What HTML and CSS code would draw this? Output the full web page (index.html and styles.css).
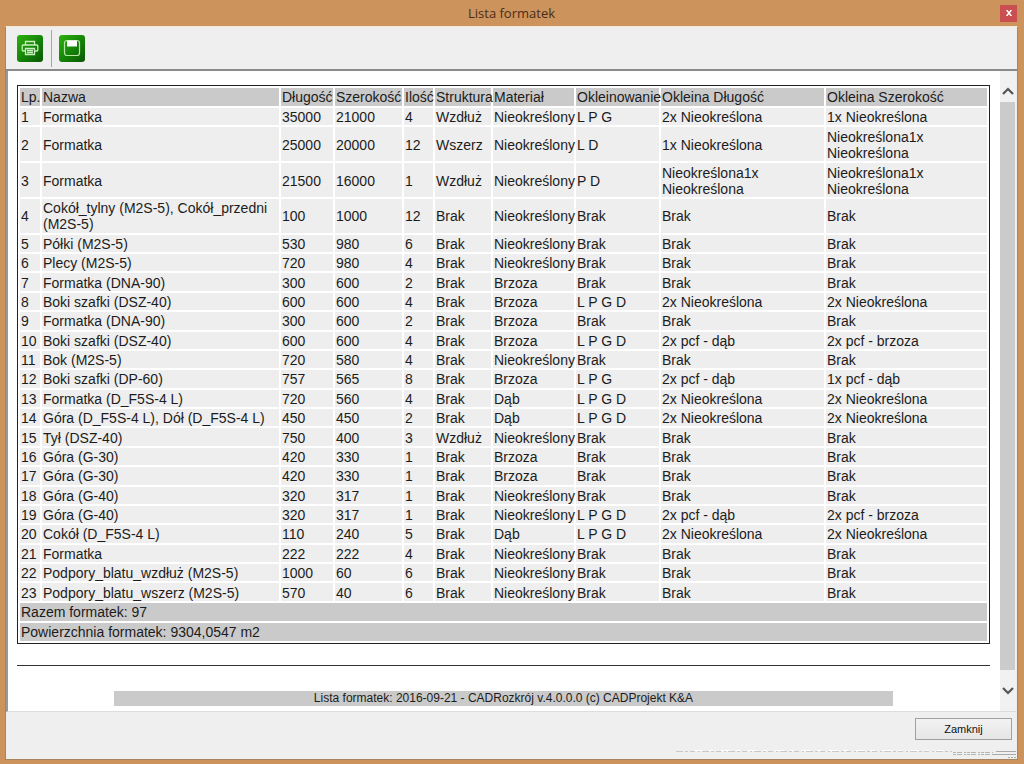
FILE: index.html
```html
<!DOCTYPE html>
<html lang="pl">
<head>
<meta charset="utf-8">
<title>Lista formatek</title>
<link rel="stylesheet" href="styles.css">
</head>
<body>
<div class="window">
  <header class="titlebar">
    <h1 class="title">Lista formatek</h1>
    <button class="close" type="button" aria-label="Zamknij okno"><svg width="6" height="6" viewBox="0 0 6 6"><path d="M1 .5 5 5.5M5 .5 1 5.5" stroke="#fff" stroke-width="1.4"/><path d="M0 .5h2M4 .5h2M0 5.5h2M4 5.5h2" stroke="#fff" stroke-width=".7"/></svg></button>
  </header>
  <div class="client">
    <div class="toolbar">
      <button class="tool" type="button" aria-label="Drukuj"><svg width="18" height="18" viewBox="0 0 18 18" fill="none" stroke="#c9efbf" stroke-width="1.3"><path d="M4.5 6V2.5h9V6M4 12H2.2Q1.2 12 1.2 11V7Q1.2 6 2.2 6h13.6q1 0 1 1v4q0 1-1 1H14"/><path d="M4.5 9.5h9v6h-9zM6 11.5h6M6 13.5h6"/></svg></button>
      <span class="divider"></span>
      <button class="tool" type="button" aria-label="Zapisz"><svg width="18" height="18" viewBox="0 0 18 18"><rect x="1.5" y="1.5" width="15" height="15" rx="2.5" fill="none" stroke="#b5e6a6" stroke-width="1.2"/><path d="M4 1.5h10v6H4z" fill="#fff"/></svg></button>
    </div>
    <div class="view">
      <main class="report">
        <table class="parts">
          <colgroup><col class="c-lp"><col class="c-name"><col class="c-len"><col class="c-wid"><col class="c-qty"><col class="c-str"><col class="c-mat"><col class="c-edge"><col class="c-el"><col class="c-ew"></colgroup>
          <thead><tr><th>Lp.</th><th>Nazwa</th><th>Długość</th><th>Szerokość</th><th>Ilość</th><th>Struktura</th><th>Materiał</th><th>Okleinowanie</th><th>Okleina Długość</th><th>Okleina Szerokość</th></tr></thead>
          <tbody>
            <tr><td>1</td><td>Formatka</td><td>35000</td><td>21000</td><td>4</td><td>Wzdłuż</td><td>Nieokreślony</td><td>L P G</td><td>2x Nieokreślona</td><td>1x Nieokreślona</td></tr>
            <tr><td>2</td><td>Formatka</td><td>25000</td><td>20000</td><td>12</td><td>Wszerz</td><td>Nieokreślony</td><td>L D</td><td>1x Nieokreślona</td><td>Nieokreślona1x<br>Nieokreślona</td></tr>
            <tr><td>3</td><td>Formatka</td><td>21500</td><td>16000</td><td>1</td><td>Wzdłuż</td><td>Nieokreślony</td><td>P D</td><td>Nieokreślona1x<br>Nieokreślona</td><td>Nieokreślona1x<br>Nieokreślona</td></tr>
            <tr><td>4</td><td>Cokół_tylny (M2S-5), Cokół_przedni (M2S-5)</td><td>100</td><td>1000</td><td>12</td><td>Brak</td><td>Nieokreślony</td><td>Brak</td><td>Brak</td><td>Brak</td></tr>
            <tr><td>5</td><td>Półki (M2S-5)</td><td>530</td><td>980</td><td>6</td><td>Brak</td><td>Nieokreślony</td><td>Brak</td><td>Brak</td><td>Brak</td></tr>
            <tr><td>6</td><td>Plecy (M2S-5)</td><td>720</td><td>980</td><td>4</td><td>Brak</td><td>Nieokreślony</td><td>Brak</td><td>Brak</td><td>Brak</td></tr>
            <tr><td>7</td><td>Formatka (DNA-90)</td><td>300</td><td>600</td><td>2</td><td>Brak</td><td>Brzoza</td><td>Brak</td><td>Brak</td><td>Brak</td></tr>
            <tr><td>8</td><td>Boki szafki (DSZ-40)</td><td>600</td><td>600</td><td>4</td><td>Brak</td><td>Brzoza</td><td>L P G D</td><td>2x Nieokreślona</td><td>2x Nieokreślona</td></tr>
            <tr><td>9</td><td>Formatka (DNA-90)</td><td>300</td><td>600</td><td>2</td><td>Brak</td><td>Brzoza</td><td>Brak</td><td>Brak</td><td>Brak</td></tr>
            <tr><td>10</td><td>Boki szafki (DSZ-40)</td><td>600</td><td>600</td><td>4</td><td>Brak</td><td>Brzoza</td><td>L P G D</td><td>2x pcf - dąb</td><td>2x pcf - brzoza</td></tr>
            <tr><td>11</td><td>Bok (M2S-5)</td><td>720</td><td>580</td><td>4</td><td>Brak</td><td>Nieokreślony</td><td>Brak</td><td>Brak</td><td>Brak</td></tr>
            <tr><td>12</td><td>Boki szafki (DP-60)</td><td>757</td><td>565</td><td>8</td><td>Brak</td><td>Brzoza</td><td>L P G</td><td>2x pcf - dąb</td><td>1x pcf - dąb</td></tr>
            <tr><td>13</td><td>Formatka (D_F5S-4 L)</td><td>720</td><td>560</td><td>4</td><td>Brak</td><td>Dąb</td><td>L P G D</td><td>2x Nieokreślona</td><td>2x Nieokreślona</td></tr>
            <tr><td>14</td><td>Góra (D_F5S-4 L), Dół (D_F5S-4 L)</td><td>450</td><td>450</td><td>2</td><td>Brak</td><td>Dąb</td><td>L P G D</td><td>2x Nieokreślona</td><td>2x Nieokreślona</td></tr>
            <tr><td>15</td><td>Tył (DSZ-40)</td><td>750</td><td>400</td><td>3</td><td>Wzdłuż</td><td>Nieokreślony</td><td>Brak</td><td>Brak</td><td>Brak</td></tr>
            <tr><td>16</td><td>Góra (G-30)</td><td>420</td><td>330</td><td>1</td><td>Brak</td><td>Brzoza</td><td>Brak</td><td>Brak</td><td>Brak</td></tr>
            <tr><td>17</td><td>Góra (G-30)</td><td>420</td><td>330</td><td>1</td><td>Brak</td><td>Brzoza</td><td>Brak</td><td>Brak</td><td>Brak</td></tr>
            <tr><td>18</td><td>Góra (G-40)</td><td>320</td><td>317</td><td>1</td><td>Brak</td><td>Nieokreślony</td><td>Brak</td><td>Brak</td><td>Brak</td></tr>
            <tr><td>19</td><td>Góra (G-40)</td><td>320</td><td>317</td><td>1</td><td>Brak</td><td>Nieokreślony</td><td>L P G D</td><td>2x pcf - dąb</td><td>2x pcf - brzoza</td></tr>
            <tr><td>20</td><td>Cokół (D_F5S-4 L)</td><td>110</td><td>240</td><td>5</td><td>Brak</td><td>Dąb</td><td>L P G D</td><td>2x Nieokreślona</td><td>2x Nieokreślona</td></tr>
            <tr><td>21</td><td>Formatka</td><td>222</td><td>222</td><td>4</td><td>Brak</td><td>Nieokreślony</td><td>Brak</td><td>Brak</td><td>Brak</td></tr>
            <tr><td>22</td><td>Podpory_blatu_wzdłuż (M2S-5)</td><td>1000</td><td>60</td><td>6</td><td>Brak</td><td>Nieokreślony</td><td>Brak</td><td>Brak</td><td>Brak</td></tr>
            <tr><td>23</td><td>Podpory_blatu_wszerz (M2S-5)</td><td>570</td><td>40</td><td>6</td><td>Brak</td><td>Nieokreślony</td><td>Brak</td><td>Brak</td><td>Brak</td></tr>
          </tbody>
          <tfoot>
            <tr><td colspan="10">Razem formatek: 97</td></tr>
            <tr><td colspan="10">Powierzchnia formatek: 9304,0547 m2</td></tr>
          </tfoot>
        </table>
        <hr class="rule">
        <p class="caption">Lista formatek: 2016-09-21 - CADRozkrój v.4.0.0.0 (c) CADProjekt K&amp;A</p>
      </main>
      <div class="scrollbar">
        <button class="arrow" type="button" aria-label="W górę"><svg width="12" height="8" viewBox="0 0 12 8"><path d="M1 7 6 2l5 5" fill="none" stroke="#555" stroke-width="2.2"/></svg></button>
        <div class="track"><div class="thumb"></div></div>
        <button class="arrow down" type="button" aria-label="W dół"><svg width="12" height="8" viewBox="0 0 12 8"><path d="M1 1l5 5 5-5" fill="none" stroke="#555" stroke-width="2.2"/></svg></button>
      </div>
    </div>
    <footer class="actions">
      <button class="ok" type="button">Zamknij</button>
      <svg class="grip" width="342" height="10" viewBox="0 0 342 10" fill="none">
        <path d="M2 2.5H278" stroke="#c9c9c9" stroke-dasharray="7 2 3 2 5 3 2 2"/>
        <path d="M20 1.5H270" stroke="#fff" stroke-dasharray="9 6 4 8"/>
        <path d="M279 3.5h40M279 5.5h40" stroke="#b5b5b5" stroke-dasharray="3 1 5 2 2 1"/>
        <path d="M322 2.5h20M318 5.5h24" stroke="#a9a9a9"/>
        <path d="M334 8.5h8" stroke="#aaa" stroke-dasharray="2 1"/>
      </svg>
    </footer>
  </div>
</div>
</body>
</html>
```
FILE: styles.css
```css
* { box-sizing: border-box; }
body { margin: 0; font-family: "Liberation Sans", Arial, sans-serif; font-size: 14px; color: #1c1c1c; }
button { border: 0; padding: 0; margin: 0; font: inherit; display: flex; align-items: center; justify-content: center; }
.window { min-height: 100vh; display: flex; flex-direction: column; background: #cc935d; padding: 0 6px 4px 5px; }
.titlebar { height: 26px; flex: none; display: grid; grid-template-columns: 1fr auto 1fr; align-items: center; }
.title { grid-column: 2; margin: 0; font: 400 13px/26px "Open Sans", "Noto Sans", sans-serif; color: #4b2c16; }
.close { justify-self: end; width: 17px; height: 17px; background: #c94f50; margin-right: 1px; }
.client { flex: 1; display: flex; flex-direction: column; background: #efefef; border: 1px solid #a9845f; border-top-color: #f6e6d4; }
.toolbar { height: 44px; flex: none; display: flex; align-items: center; gap: 8px; padding: 0 11px; border-bottom: 2px solid #8a8a8a; }
.tool { width: 26px; height: 27px; border-radius: 3px; background: linear-gradient(135deg, #2fb10e, #138207 55%, #0a5705); }
.divider { width: 1px; height: 37px; background: #a5a5a5; margin-right: -1px; }
.view { flex: 1; display: flex; background: #fff; border-left: 2px solid #999; border-bottom: 1px solid #ddd; margin-right: 1px; }
.report { flex: 1; min-width: 0; padding: 14px 10px 4px 9px; }
.parts { width: 100%; height: 559px; table-layout: fixed; border: 1px solid #222; border-collapse: separate; border-spacing: 2px; line-height: 16px; }
.parts th, .parts td { padding: 1px 1px 0; background: #eee; text-align: left; font-weight: 400; vertical-align: middle; }
.parts th { white-space: nowrap; }
.parts th, .parts tfoot td { padding-bottom: 1px; background: #cacaca; }
.c-lp { width: 20px; }
.c-len { width: 52px; }
.c-wid { width: 67px; }
.c-qty { width: 29px; }
.c-str { width: 56px; }
.c-mat { width: 81px; }
.c-edge { width: 83px; }
.c-el { width: 163px; }
.c-ew { width: 161px; }
.rule { margin: 21px 0 0; border: 0; border-top: 1px solid #333; }
.caption { width: 80%; margin: 25px auto 0; background: #cacaca; text-align: center; font-size: 12px; line-height: 15px; }
.scrollbar { width: 16px; flex: none; display: flex; flex-direction: column; background: #f1f1f1; padding-right: 1px; }
.arrow { height: 31px; flex: none; background: none; padding-top: 8px; }
.down { height: 41px; padding-top: 0; }
.track { flex: 1; display: flex; }
.thumb { flex: 1; background: #cbcbcb; }
.actions { height: 47px; flex: none; display: flex; flex-direction: column; align-items: flex-end; gap: 9px; padding: 6px 1px 0 0; }
.ok { width: 97px; height: 22px; flex: none; margin-right: 4px; border: 1px solid #a0a0a0; background: linear-gradient(#f2f2f2, #e6e6e6); font-size: 11px; color: #111; }
.grip { flex: none; }
```
